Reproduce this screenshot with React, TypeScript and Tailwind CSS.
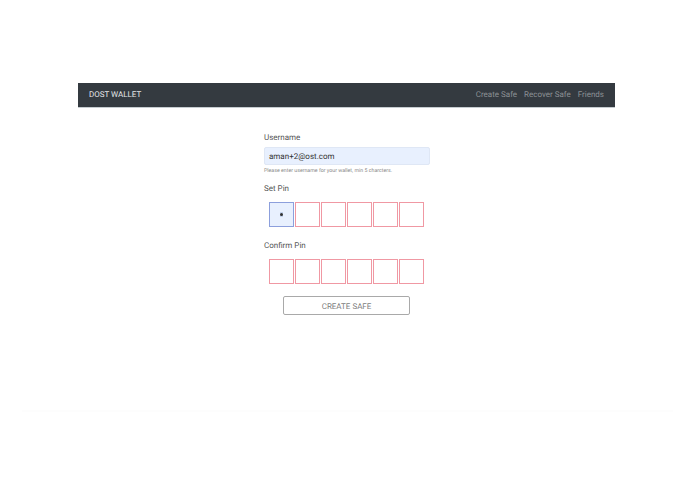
const pins = [0, 1, 2, 3, 4, 5];

const PinRow = ({ active }: { active?: boolean }) => (
  <div className="flex gap-[1px] pl-[5px]">
    {pins.map((i) =>
      active && i === 0 ? (
        <div key={i} className="w-[25px] h-[25px] border border-[#8c9fdc] bg-[#e8f0fe] flex items-center justify-center">
          <div className="w-[3px] h-[5px] bg-[#c3d3ee] flex items-center justify-center">
            <div className="w-[3px] h-[3px] rounded-full bg-[#333]"></div>
          </div>
        </div>
      ) : (
        <div key={i} className="w-[25px] h-[25px] border border-[#f098a3] bg-white"></div>
      )
    )}
  </div>
);

export default function App() {
  return (
    <div className="w-[695px] h-[494px] bg-white overflow-hidden font-['Roboto',sans-serif] text-[#495057] [text-rendering:geometricPrecision]">
      <div className="pt-[83px] px-[78px]">
        <nav className="w-[537px] h-[25px] bg-[#343a40] flex items-center justify-between px-[11px] border-b border-[#c5ccd0]">
          <span className="text-[8px] text-[#e4e6e8]">DOST WALLET</span>
          <div className="flex gap-[7px] text-[8px] text-[#8b9094]">
            <span>Create Safe</span>
            <span>Recover Safe</span>
            <span>Friends</span>
          </div>
        </nav>
      </div>
      <div className="w-[166px] ml-[264px] mt-[24px]">
        <div className="text-[8px] leading-[12px] text-[#555]">Username</div>
        <div className="mt-[3px] h-[18px] rounded-[2px] border border-[#dfe7f5] bg-[#e8f0fe] pl-[4px] pt-[2px] flex items-center text-[8px] text-[#333]">
          aman+2@ost.com
        </div>
        <div className="mt-[3px] text-[5.25px] leading-[7px] text-[#888]">Please enter username for your wallet, min 5 charcters.</div>
        <div className="mt-[8px] text-[8px] leading-[12px] text-[#555]">Set Pin</div>
        <div className="mt-[7px]">
          <PinRow active />
        </div>
        <div className="mt-[13px] text-[8px] leading-[12px] text-[#555]">Confirm Pin</div>
        <div className="mt-[7px]">
          <PinRow />
        </div>
        <div className="mt-[12px] ml-[19px] w-[127px] h-[19px] rounded-[2px] border border-[#a9a9a9] pt-[2px] flex items-center justify-center text-[8px] text-[#808080]">
          CREATE SAFE
        </div>
      </div>
      <div className="mt-[95px] mx-[22px] h-[2px] bg-[#fdfdfd]"></div>
    </div>
  );
}
